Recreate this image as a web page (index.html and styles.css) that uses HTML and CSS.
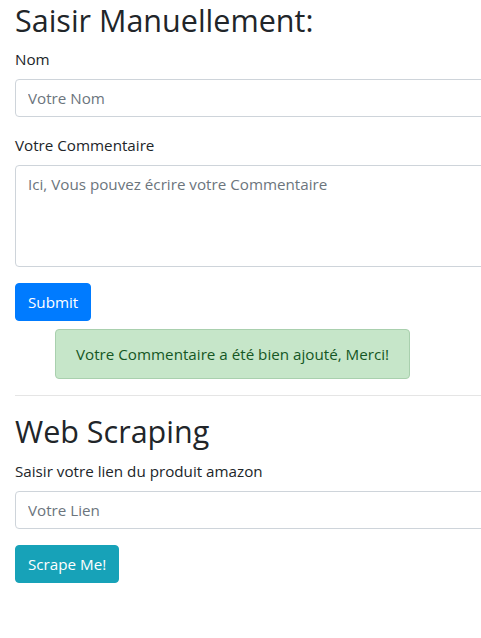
FILE: index.html
```html
<!DOCTYPE html>
<html lang="fr">
<head>
<meta charset="utf-8">
<title>Commentaires</title>
<link rel="stylesheet" href="styles.css">
</head>
<body>
<div class="page">
  <h2 class="title">Saisir Manuellement:</h2>
  <form class="form">
    <div class="group">
      <label class="label">Nom</label>
      <input class="field" type="text" placeholder="Votre Nom">
    </div>
    <div class="group">
      <label class="label">Votre Commentaire</label>
      <textarea class="field area" placeholder="Ici, Vous pouvez écrire votre Commentaire"></textarea>
    </div>
    <button type="button" class="btn btn-primary">Submit</button>
  </form>
  <div class="alert">Votre Commentaire a été bien ajouté, Merci!</div>
  <hr class="rule">
  <h2 class="title">Web Scraping</h2>
  <form class="form">
    <div class="group">
      <label class="label">Saisir votre lien du produit amazon</label>
      <input class="field" type="text" placeholder="Votre Lien">
    </div>
    <button type="button" class="btn btn-info">Scrape Me!</button>
  </form>
</div>
</body>
</html>
```

FILE: styles.css
```css
html, body {
  margin: 0;
  padding: 0;
  overflow: hidden;
  background: #fff;
}
body {
  font-family: "Open Sans", "Noto Sans", "Liberation Sans", sans-serif;
  font-size: 15.2px;
  line-height: 24px;
  color: #212529;
}
.page {
  width: 600px;
  padding: 1px 15px 0;
}
.title {
  margin: 0 0 8px;
  font-size: 30.5px;
  line-height: 38.4px;
  font-weight: 400;
}
.form {
  margin: 0;
}
.group {
  margin-bottom: 16px;
}
.label {
  display: block;
  margin-bottom: 8px;
}
.field {
  display: block;
  box-sizing: border-box;
  width: 100%;
  height: 38px;
  padding: 6px 12px;
  font: inherit;
  color: #495057;
  background: #fff;
  border: 1px solid #ced4da;
  border-radius: 4px;
  outline: none;
}
.field::placeholder {
  color: #6c757d;
  opacity: 1;
}
.area {
  height: 102px;
  resize: none;
}
.btn {
  display: inline-block;
  box-sizing: border-box;
  height: 38px;
  padding: 6px 12px;
  font: inherit;
  color: #fff;
  border: 1px solid transparent;
  border-radius: 4px;
}
.btn-primary {
  background: #007bff;
  border-color: #007bff;
}
.btn-info {
  background: #17a2b8;
  border-color: #17a2b8;
}
.alert {
  width: fit-content;
  margin: 8px 0 0 40px;
  padding: 12px 20px;
  background: #c6e6c9;
  border: 1px solid #a9d0ae;
  border-radius: 4px;
  color: #155724;
  text-align: center;
}
.rule {
  margin: 16px 0;
  border: 0;
  border-top: 1px solid rgba(0, 0, 0, 0.1);
}
```
